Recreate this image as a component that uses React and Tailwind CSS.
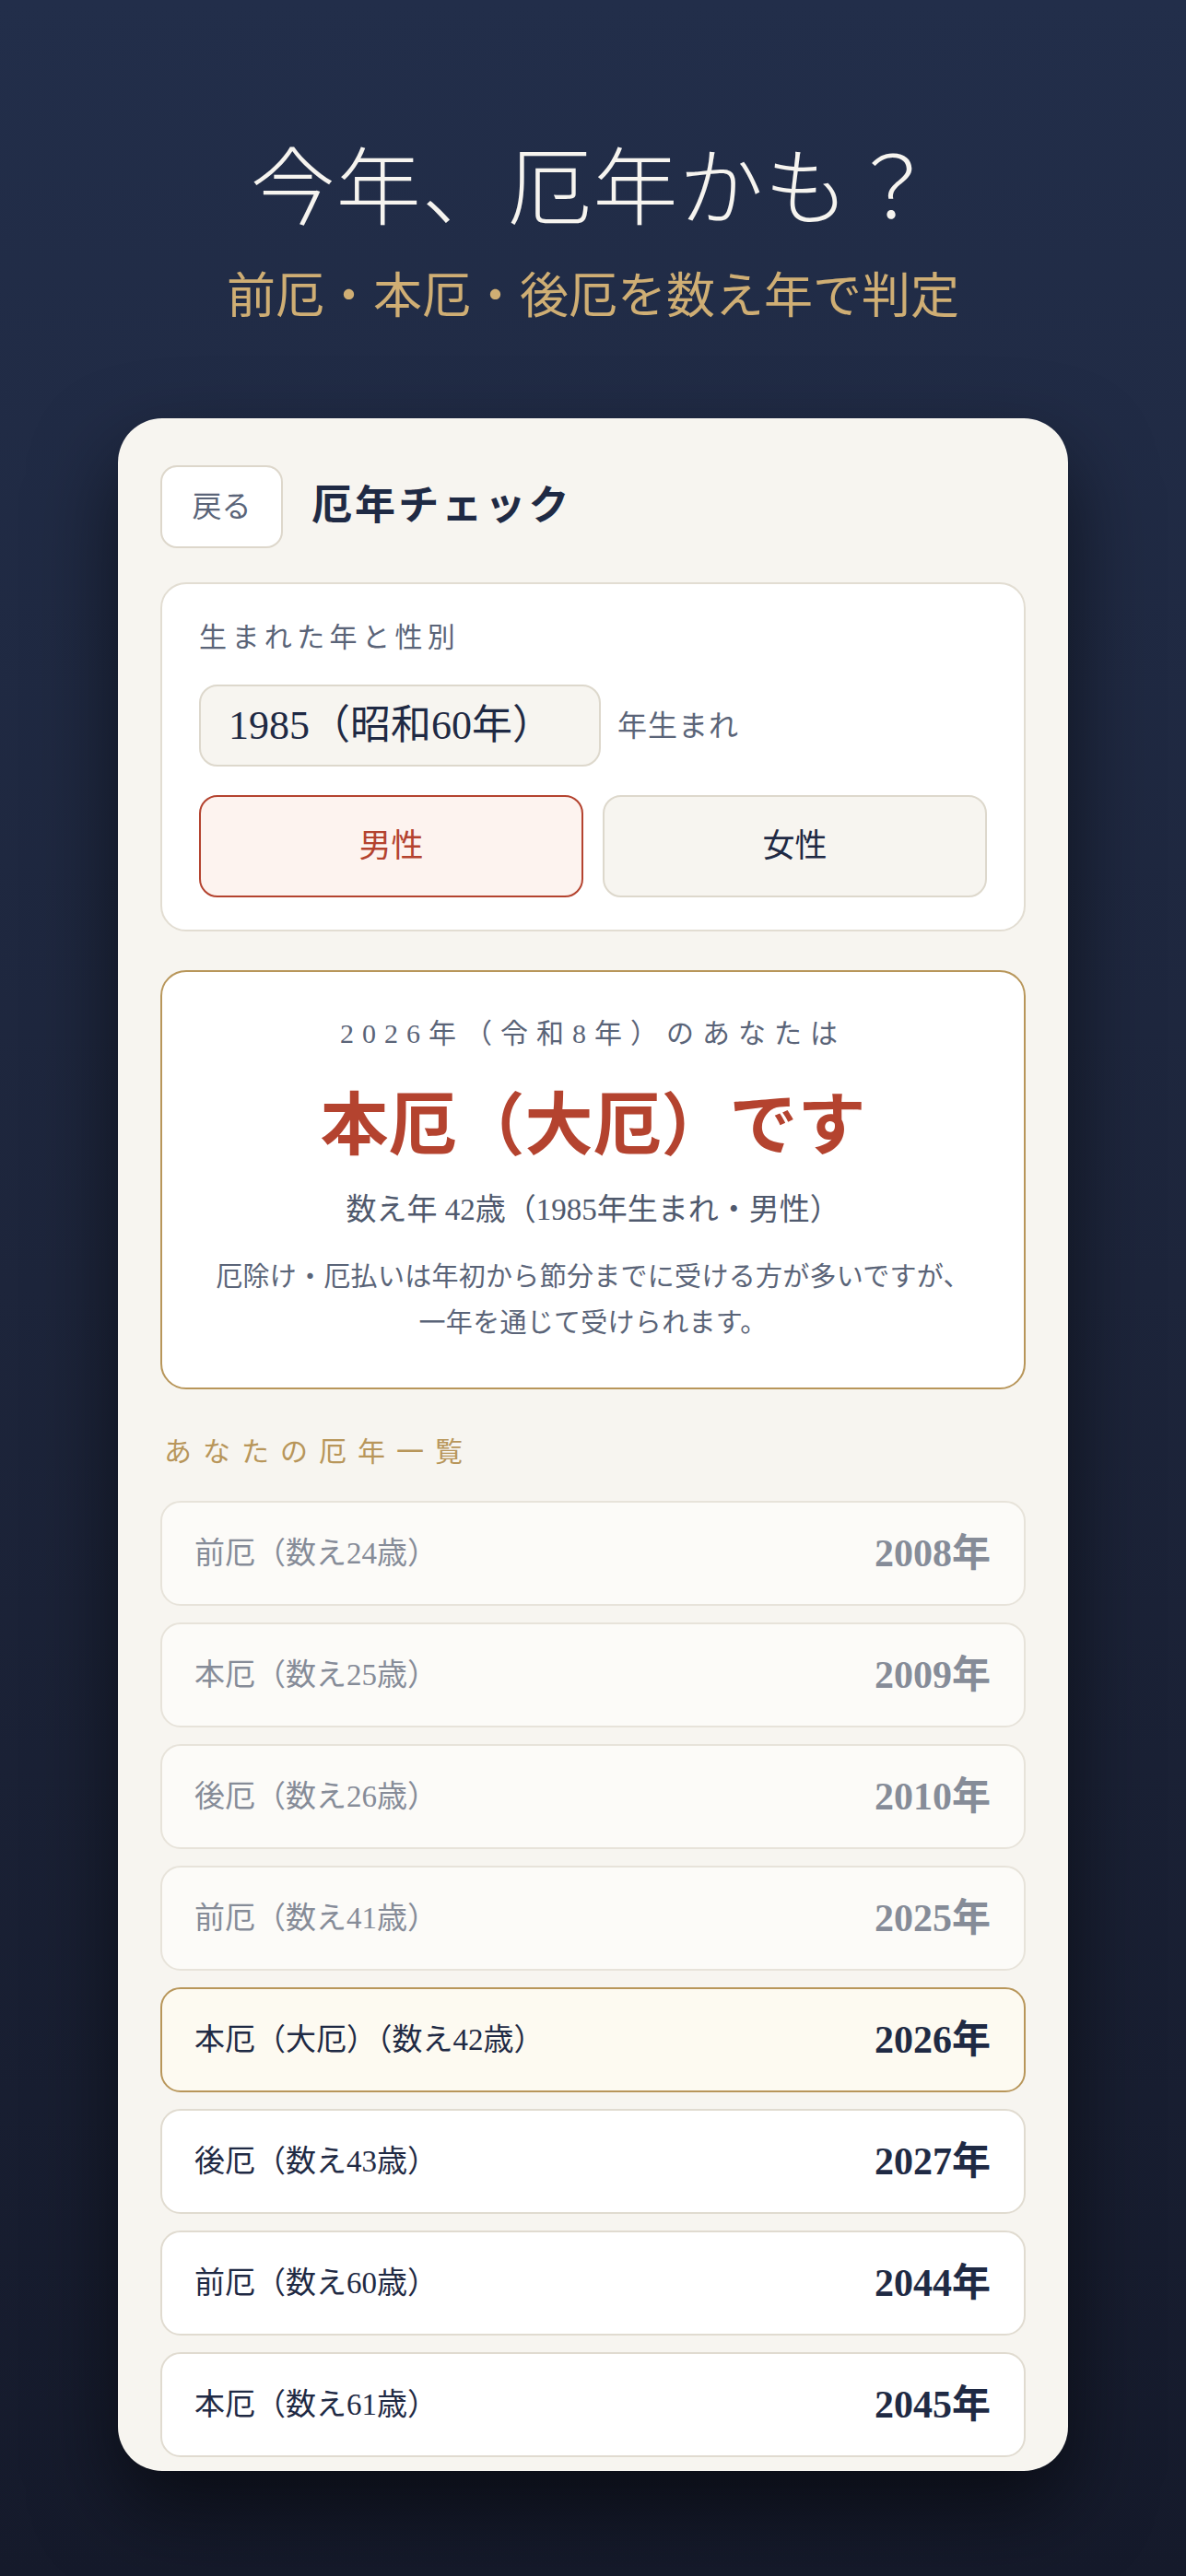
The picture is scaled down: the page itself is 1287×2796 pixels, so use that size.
import React from "react";

const rows = [
  { label: "前厄（数え24歳）", year: "2008年", state: "past" },
  { label: "本厄（数え25歳）", year: "2009年", state: "past" },
  { label: "後厄（数え26歳）", year: "2010年", state: "past" },
  { label: "前厄（数え41歳）", year: "2025年", state: "past" },
  { label: "本厄（大厄）（数え42歳）", year: "2026年", state: "current" },
  { label: "後厄（数え43歳）", year: "2027年", state: "future" },
  { label: "前厄（数え60歳）", year: "2044年", state: "future" },
  { label: "本厄（数え61歳）", year: "2045年", state: "future" },
];

function Row({ label, year, state }) {
  const box =
    state === "past"
      ? "bg-[#fcfbf8] border-[#e7e3da] text-[#868c98]"
      : state === "current"
      ? "bg-[#fdfaf1] border-[#b8965a] text-[#1f2a44]"
      : "bg-white border-[#e0dbd0] text-[#1f2a44]";
  return (
    <div
      className={
        "h-[114px] rounded-[22px] border-2 pl-[35px] pr-[36px] flex items-center justify-between " +
        box
      }
    >
      <span className="text-[33px] leading-none">{label}</span>
      <span className="text-[42px] leading-none font-bold">{year}</span>
    </div>
  );
}

export default function App() {
  return (
    <div className="w-full h-[2796px] overflow-hidden bg-[linear-gradient(180deg,#222e4a_0%,#1d253b_50%,#151a2b_100%)] font-['Liberation_Serif','Noto_Sans_CJK_JP',serif] flex flex-col items-center pt-[160px]">
      <h1 className="text-[92px] leading-none font-light text-[#f6f4ef] tracking-[0.01em]">
        今年、厄年かも？
      </h1>
      <p className="mt-[44px] text-[53px] leading-none text-[#cfae74]">
        前厄・本厄・後厄を数え年で判定
      </p>

      <div className="mt-[105px] w-[1031px] rounded-[48px] bg-[#f7f5f0] px-[46px] pt-[51px] pb-[15px] shadow-[0_40px_90px_rgba(0,0,0,0.55)]">
        {/* header */}
        <div className="flex items-center gap-[31px]">
          <button className="w-[133px] h-[90px] rounded-[18px] border-2 border-[#ddd7cb] bg-white text-[32px] leading-none text-[#5a6478]">
            戻る
          </button>
          <h2 className="text-[44px] leading-none font-bold text-[#1f2a44] tracking-[0.07em]">
            厄年チェック
          </h2>
        </div>

        {/* input card */}
        <div className="mt-[37px] rounded-[28px] border-2 border-[#e2ddd2] bg-white px-[40px] pt-[35px] pb-[35px]">
          <div className="text-[30px] leading-[45px] tracking-[0.18em] text-[#5a6478]">
            生まれた年と性別
          </div>
          <div className="mt-[29px] flex items-center gap-[18px]">
            <div className="w-[436px] h-[89px] rounded-[20px] border-2 border-[#ddd8cc] bg-[#f7f5f0] px-[30px] flex items-center text-[44px] leading-none text-[#1f2a44]">
              1985（昭和60年）
            </div>
            <span className="text-[32px] leading-none text-[#5a6478] tracking-[0.03em]">年生まれ</span>
          </div>
          <div className="mt-[31px] grid grid-cols-2 gap-[21px]">
            <button className="h-[111px] rounded-[20px] border-2 border-[#b4432f] bg-[#fdf3ef] text-[35px] leading-none text-[#b4432f]">
              男性
            </button>
            <button className="h-[111px] rounded-[20px] border-2 border-[#ddd8cc] bg-[#f7f5f0] text-[35px] leading-none text-[#1f2a44]">
              女性
            </button>
          </div>
        </div>

        {/* result card */}
        <div className="mt-[42px] rounded-[28px] border-2 border-[#b8965a] bg-white pt-[44px] pb-[45px] flex flex-col items-center text-center">
          <div className="text-[30px] leading-[45px] tracking-[0.3em] text-[#5a6478]">
            2026年（令和8年）のあなたは
          </div>
          <div className="mt-[34px] text-[74px] leading-[89px] font-bold text-[#b4432f]">
            本厄（大厄）です
          </div>
          <div className="mt-[22px] text-[33px] leading-[48px] text-[#4f596d]">
            数え年 42歳（1985年生まれ・男性）
          </div>
          <div className="mt-[24px] text-[29px] leading-[50px] tracking-[0.01em] text-[#5a6478]">
            厄除け・厄払いは年初から節分までに受ける方が多いですが、
            <br />
            一年を通じて受けられます。
          </div>
        </div>

        {/* list */}
        <div className="mt-[45px] pl-[4px] text-[30px] leading-[45px] tracking-[0.4em] text-[#b8965a]">
          あなたの厄年一覧
        </div>
        <div className="mt-[31px] flex flex-col gap-[18px]">
          {rows.map((r) => (
            <Row key={r.year} {...r} />
          ))}
        </div>
      </div>
    </div>
  );
}
